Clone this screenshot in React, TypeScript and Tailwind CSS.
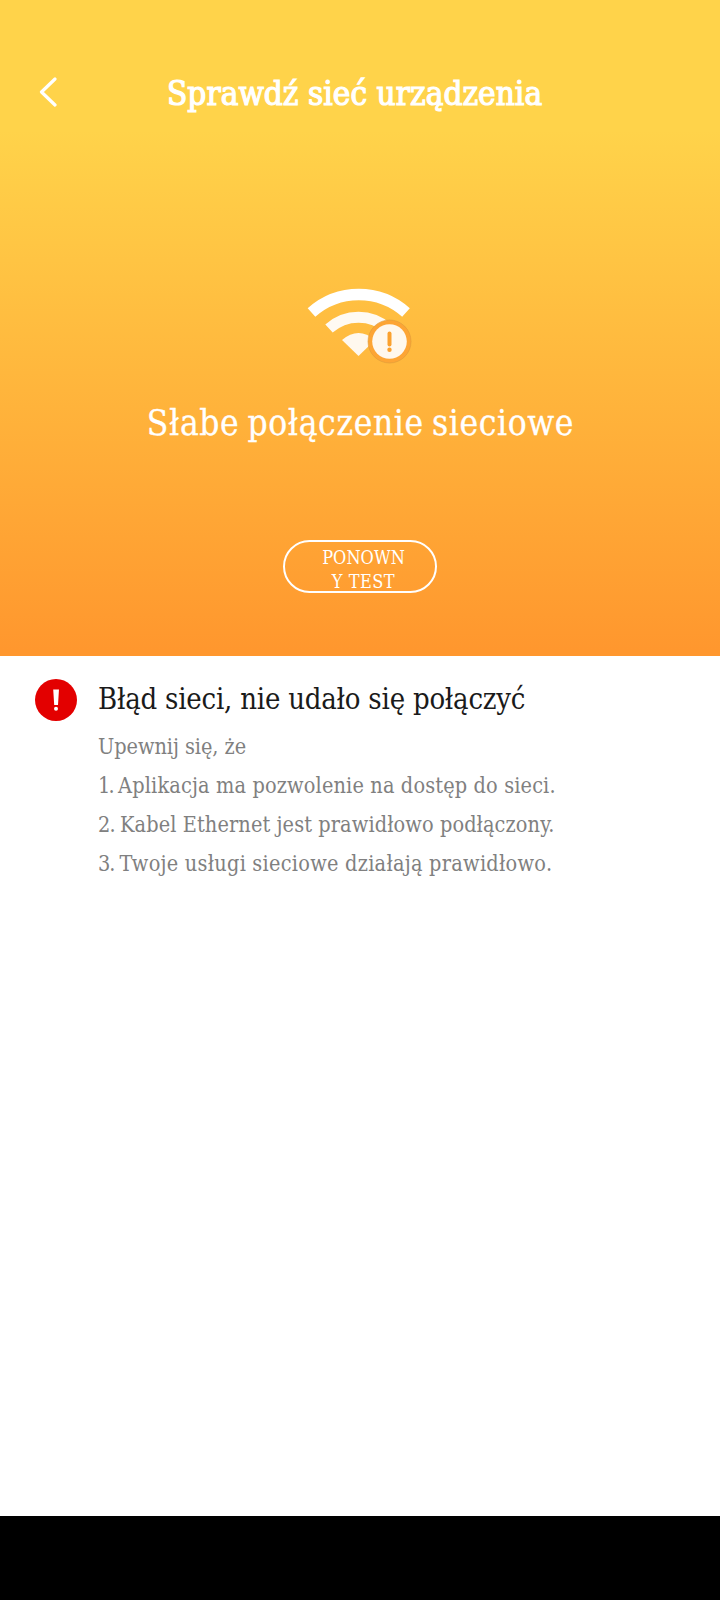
const slab = "font-['Roboto_Slab','DejaVu_Serif_Condensed','DejaVu_Serif',serif] [font-stretch:condensed] whitespace-nowrap";

const steps = [
  { mark: "", markSpacing: "", text: "Upewnij się, że", spacing: "tracking-[-0.06px]" },
  { mark: "1. ", markSpacing: "tracking-[-1.7px] [word-spacing:0.6px]", text: "Aplikacja ma pozwolenie na dostęp do sieci.", spacing: "tracking-[0.145px]" },
  { mark: "2. ", markSpacing: "tracking-[-0.85px]", text: "Kabel Ethernet jest prawidłowo podłączony.", spacing: "tracking-[0.1px]" },
  { mark: "3. ", markSpacing: "tracking-[-1px]", text: "Twoje usługi sieciowe działają prawidłowo.", spacing: "tracking-[0.28px] [word-spacing:-0.2px]" },
];

function WeakWifi() {
  return (
    <svg width="106" height="76" viewBox="0 0 106 76" fill="none">
      <path d="M4.500 24.5 A71 71 0 0 1 99 24.5" stroke="#fff" strokeWidth="11.500" />
      <path d="M22 40.500 A44 44 0 0 1 81 40.500" stroke="#fffaf2" strokeWidth="11" />
      <path d="M35 52 Q51.500 38 68 52 L51.500 68 Z" fill="#fff8ee" />
      <circle cx="82.500" cy="53.500" r="21.500" fill="#fda535" stroke="#dc9a3a" strokeWidth="0.6" />
      <circle cx="82.500" cy="53.500" r="17.300" fill="#fff8ee" />
      <path d="M82.500 45.500 V56.500" stroke="#fba12f" strokeWidth="4" strokeLinecap="round" />
      <circle cx="82.500" cy="61.800" r="2.200" fill="#fba12f" />
    </svg>
  );
}

export default function App() {
  return (
    <div className={`${slab} flex h-[1600px] w-[720px] flex-col bg-white`}>
      <section className="flex h-[656px] flex-col items-center bg-[linear-gradient(to_bottom,#ffd34a_0px,#ffd34a_130px,#ff972e_650px)] text-white">
        <header className="flex h-[138px] w-full items-start pt-[73px] pl-[38px]">
          <svg width="20" height="30" viewBox="0 0 20 30" fill="none" className="mt-[4px]">
            <path d="M17 2 L3.500 15 L17 28" stroke="#fff" strokeWidth="3.200" strokeLinecap="round" strokeLinejoin="round" />
          </svg>
          <h1 className="ml-[109px] mt-px text-[33px] leading-[40px] tracking-[0.04px] [-webkit-text-stroke:1.2px_white]">Sprawdź sieć urządzenia</h1>
        </header>
        <div className="mt-[150px]">
          <WeakWifi />
        </div>
        <p className="mt-[35px] pl-px text-[35px] leading-[48px] tracking-[0.64px] [word-spacing:-2.5px] [-webkit-text-stroke:0.3px_white]">Słabe połączenie sieciowe</p>
        <button className="mt-[93px] flex h-[53px] w-[154px] flex-col items-center rounded-full border-2 border-white pt-[4px] pl-[7px] text-[18px] leading-[24px]">
          <span className="tracking-[0.05px]">PONOWN</span>
          <span className="tracking-[0.5px]">Y TEST</span>
        </button>
      </section>
      <main className="flex h-[860px] pt-[23px] pl-[35px]">
        <svg width="42" height="42" viewBox="0 0 42 42">
          <circle cx="21" cy="21" r="21" fill="#e30000" />
          <path d="M18.200 10.500 H24 L23 26 H19.200 Z" fill="#fff" />
          <circle cx="21" cy="29.700" r="2" fill="#fff" />
        </svg>
        <div className="ml-[21px]">
          <h2 className="text-[29px] leading-[40px] tracking-[-0.22px] text-[#1a1a1a]">Błąd sieci, nie udało się połączyć</h2>
          <ul className="mt-[8px] text-[21.500px] leading-[39px] text-[#808080]">
            {steps.map((s) => (
              <li key={s.text} className={s.spacing}>
                {s.mark && <span className={s.markSpacing}>{s.mark}</span>}
                {s.text}
              </li>
            ))}
          </ul>
        </div>
      </main>
      <footer className="h-[84px] bg-black" />
    </div>
  );
}
